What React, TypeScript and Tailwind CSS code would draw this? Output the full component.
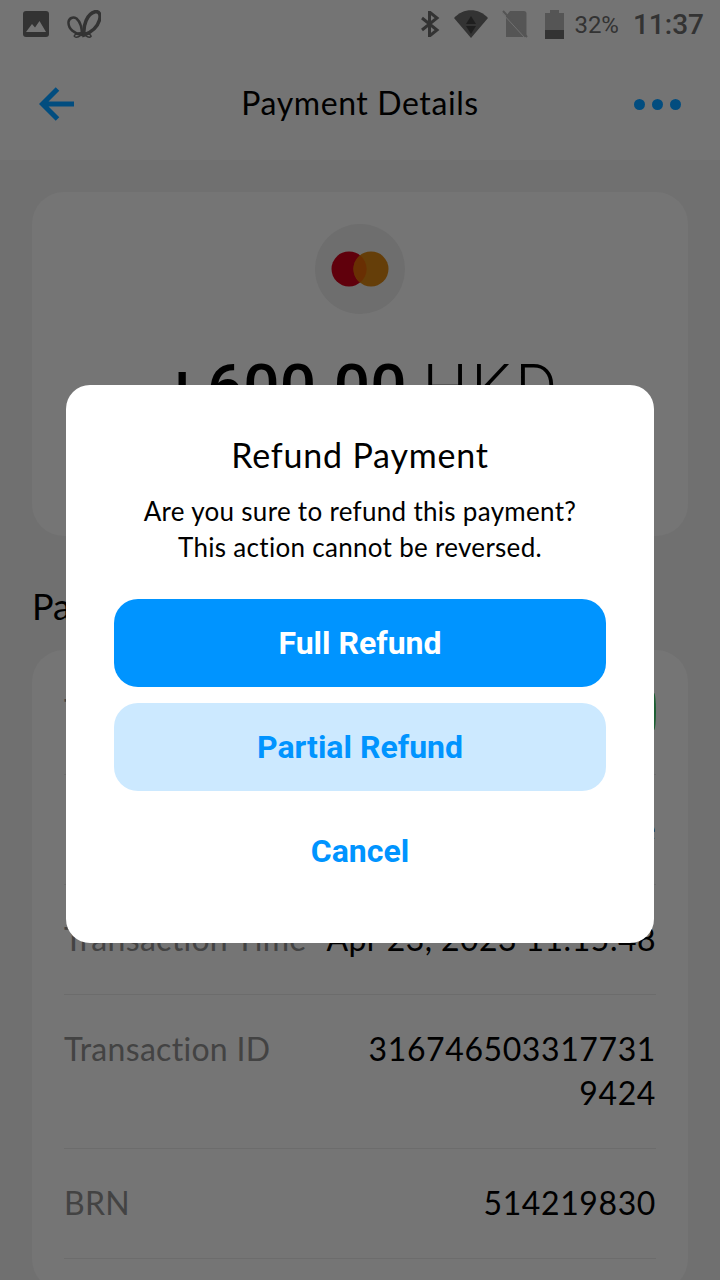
import React from 'react';

const bodyFont = "font-['Lato','Noto_Sans',sans-serif]";
const buttonFont = "font-['Roboto',sans-serif]";

function StatusBar() {
  return (
    <div className="flex h-12 items-center justify-between pl-[23px] pr-4 font-['Roboto',sans-serif] text-[#555555]">
      <div className="flex items-center gap-[18px]">
        <svg width="26" height="26" viewBox="0 0 26 26">
          <rect width="26" height="26" rx="3" fill="#555555" />
          <path d="M3 21 L9 13 L12 16.500 L16.500 10 L23 21 Z" fill="#c4c4c4" />
        </svg>
        <svg width="34" height="28" viewBox="0 0 34 28" fill="none" stroke="#555555">
          <path d="M15 25 C8 24 1 19 1.500 12 C2 8 6 6.500 9.500 8.500 C13.500 12 15 19 15 25 Z" strokeWidth="2.500" />
          <path d="M17 25 C16 15 20 4 28 1.800 C32.500 0.800 34 5 32.500 10 C30.500 17 25 22 17 25 Z" strokeWidth="3.500" />
          <path d="M15 22.500 C10 23 6.500 25 7.500 26.500 C9.500 28 13.500 27 15 23" strokeWidth="1.500" />
          <path d="M17 22.500 C21 23 24.500 25 24 26.500 C22.500 28 18.500 27 17 23" strokeWidth="1.500" />
        </svg>
      </div>
      <div className="flex items-center">
        <svg width="20" height="26" viewBox="0 0 20 26" fill="none" stroke="#555555" strokeWidth="3">
          <path d="M2 7 L17 19 L9.500 25 V1 L17 7 L2 19" />
        </svg>
        <svg className="ml-[14px]" width="34" height="28" viewBox="0 0 34 28">
          <path d="M0 8 C9 -2.500 25 -2.500 34 8 L17 28 Z" fill="#555555" />
          <path d="M17 6 L22 14 H12 Z M12 16 H22 L17 24 Z" fill="#333333" />
        </svg>
        <svg className="ml-[14px]" width="26" height="28" viewBox="0 0 26 28">
          <path d="M8 1 H22 C23.500 1 24.500 2 24.500 3.500 V27 H4 V6 Z" fill="#8e8e8e" />
          <path d="M1 1 L25 27" stroke="#8e8e8e" strokeWidth="2" />
          <path d="M0 3 L23 28" stroke="#bbbbbb" strokeWidth="1" />
        </svg>
        <svg className="ml-[17px]" width="19" height="29" viewBox="0 0 19 29">
          <path d="M5 0 H14 V3 H19 V29 H0 V3 H5 Z" fill="#8e8e8e" />
          <rect y="20" width="19" height="9" fill="#555555" />
        </svg>
        <span className="mt-[2px] ml-[10px] text-2xl">32%</span>
        <span className="mt-[2px] ml-[14px] text-[28px] font-medium">11:37</span>
      </div>
    </div>
  );
}

function Toolbar() {
  return (
    <div className="flex h-28 items-center justify-between px-[39px]">
      <div className="w-[47px]">
        <svg width="35" height="34" viewBox="0 0 35 34" fill="none" stroke="#0480d4" strokeWidth="5">
          <path d="M35 17 H4 M18.500 2 L3.500 17 L18.500 32" />
        </svg>
      </div>
      <span className="mb-[2px] text-[32px] tracking-[0.6px] text-black">Payment Details</span>
      <div className="flex gap-[7px]">
        <div className="size-[11px] rounded-full bg-[#0480d4]" />
        <div className="size-[11px] rounded-full bg-[#0480d4]" />
        <div className="size-[11px] rounded-full bg-[#0480d4]" />
      </div>
    </div>
  );
}

function Row({ label, value, children, className = '', valueClass = 'tracking-[0.4px]' }: { label: string; value?: string; children?: React.ReactNode; className?: string; valueClass?: string }) {
  return (
    <div className={`flex justify-between gap-4 border-b border-[#b4b4b4] pt-8 pb-[33px] text-[32px] leading-[44px] ${className}`}>
      <span className="shrink-0 tracking-[0.3px] text-[#707070]">{label}</span>
      {value && <span className={`min-w-0 text-right break-all text-black ${valueClass}`}>{value}</span>}
      {children}
    </div>
  );
}

export default function App() {
  return (
    <div className={`relative h-[1280px] w-[720px] overflow-hidden bg-[#bbbbbb] ${bodyFont}`}>
      <div className="bg-[#c2c2c2]">
        <StatusBar />
        <Toolbar />
      </div>

      <div className="px-8 pt-8">
        <div className="flex h-[344px] flex-col items-center rounded-[32px] bg-[#c3c3c3] pt-8">
          <div className="flex size-[90px] items-center justify-center rounded-full bg-[#b7b7b7]">
            <svg width="58" height="36" viewBox="0 0 58 36">
              <circle cx="18" cy="18" r="17.500" fill="#a00014" />
              <circle cx="40" cy="18" r="17.500" fill="#a8680f" />
              <path d="M29 4.300 A17.500 17.500 0 0 1 29 31.700 A17.500 17.500 0 0 1 29 4.300 Z" fill="#b04f05" />
            </svg>
          </div>
          <div className="mt-[43px] ml-[5px] font-['Roboto',sans-serif] text-[64px] leading-[64px] text-black">
            <span className="mr-[7px] font-medium">+</span>
            <span className="font-medium">600.00</span> <span className="font-light tracking-[3.5px]">HKD</span>
          </div>
        </div>

        <h2 className="mt-[48px] text-4xl leading-[44px] font-normal text-black">Payment Details</h2>

        <div className="mt-[22px] rounded-[32px] bg-[#c3c3c3] px-8 pt-[7px] pb-8">
          <Row label="Transaction Status" className="pb-[41px]">
            <div className="mt-[4px] h-[37px] w-[120px] rounded-[2px/18px] bg-[#2f9e55]" />
          </Row>
          <Row label="Payment Type" value="Sale" />
          <Row label="Transaction Time" value="Apr 23, 2023 11:15:48" />
          <Row label="Transaction ID" value="3167465033177319424" valueClass="w-[292px] tracking-[0.6px]" />
          <Row label="BRN" value="514219830" valueClass="tracking-[0.6px]" />
        </div>
      </div>

      {/* dim layer with the refund dialog */}
      <div className="absolute inset-0 flex items-center justify-center bg-black/40 pt-12">
        <div className="flex w-[588px] flex-col items-center rounded-[24px] bg-white px-12 pt-[50px] pb-12">
          <h1 className="text-[34px] leading-10 font-normal tracking-[0.8px] text-black">Refund Payment</h1>
          <p className="mt-[18px] text-center text-[26px] leading-9 tracking-[0.3px] text-black">
            Are you sure to refund this payment?
            <br />
            This action cannot be reversed.
          </p>
          <div className={`mt-[34px] flex w-full flex-col gap-4 text-[32px] font-bold ${buttonFont}`}>
            <button className="h-[88px] rounded-[24px] bg-[#0094ff] text-white">Full Refund</button>
            <button className="h-[88px] rounded-[24px] bg-[#cce9ff] text-[#0094ff]">Partial Refund</button>
            <button className="h-[88px] rounded-[24px] text-[#0094ff]">Cancel</button>
          </div>
        </div>
      </div>
    </div>
  );
}
